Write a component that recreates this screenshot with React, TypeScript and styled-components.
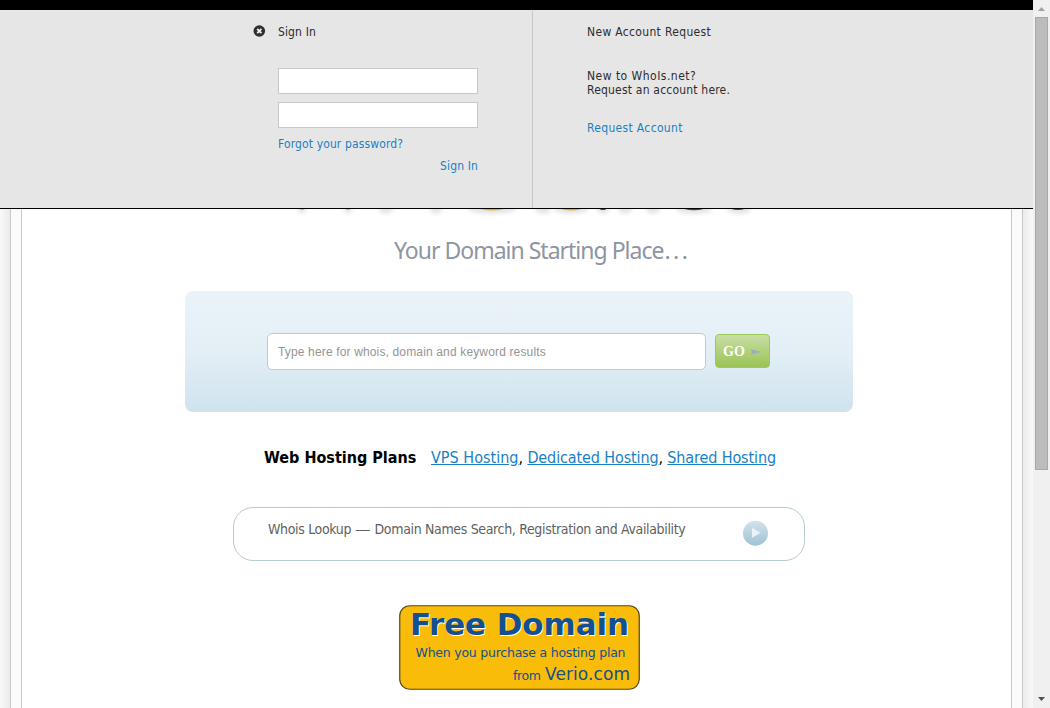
import React from "react";
import styled, { createGlobalStyle } from "styled-components";

const Global = createGlobalStyle`
  * { box-sizing: border-box; }
  body { margin: 0; background: #fff; overflow: hidden; }
`;
const ui = `"DejaVu Sans Condensed", "DejaVu Sans", Tahoma, sans-serif`;

const Window = styled.div`
  display: flex;
  width: 1050px;
  height: 708px;
  font-family: ${ui};
`;
const Viewport = styled.div`
  position: relative;
  display: flex;
  width: 1033px;
  height: 708px;
  overflow: hidden;
`;
const Edge = styled.div<{ $right?: boolean }>`
  width: 10px;
  flex: none;
  background: linear-gradient(${p => (p.$right ? "to right" : "to left")}, #ebebeb, #f9f9f9);
`;
const Gutter = styled.div`
  width: 12px;
  flex: none;
  border: solid #c8c8c8;
  border-width: 0 1px;
  background: #fbfbfb;
`;
const Page = styled.main`
  width: 987px;
  flex: 1;
  padding-top: 205px;
  display: flex;
  flex-direction: column;
  align-items: flex-start;
`;
const LogoArt = styled.svg`
  display: block;
  margin-left: 268px;
`;
const Tagline = styled.h2`
  margin: 14px 0 0 372px;
  font: 400 23px/32px "Noto Sans", sans-serif;
  letter-spacing: -1px;
  color: #8e95a1;
  white-space: nowrap;
`;
const Dots = styled.span`
  margin-left: 1px;
  letter-spacing: 2.5px;
`;
const SearchBox = styled.form`
  display: flex;
  align-items: flex-start;
  gap: 9px;
  width: 668px;
  height: 121px;
  margin: 25px 0 0 163px;
  padding: 42px 0 0 82px;
  border-radius: 8px;
  background: linear-gradient(#e9f3f7 0, #e8f1f8 20%, #e3eff5 50%, #cfe3ee 100%);
`;
const SearchInput = styled.input`
  width: 439px;
  height: 37px;
  padding: 0 10px;
  border: 1px solid #c8c8c8;
  border-radius: 5px;
  background: #fff;
  font: 12px "Liberation Sans", Arial, sans-serif;
  letter-spacing: 0.15px;
  &::placeholder { color: #959595; opacity: 1; }
`;
const GoButton = styled.button`
  display: flex;
  align-items: center;
  gap: 5px;
  width: 55px;
  height: 34px;
  margin-top: 1px;
  padding: 1px 0 0 7px;
  border: 1px solid #9ec75c;
  border-radius: 4px;
  background: linear-gradient(#c9dea5, #9bc354);
  color: #fff;
  font: bold 14px "Liberation Serif", serif;
`;
const Hosting = styled.div`
  display: flex;
  height: 24px;
  margin: 34px 0 0 242px;
  font-size: 16px;
  line-height: 24px;
  color: #000;
  white-space: nowrap;
`;
const HostingTitle = styled.strong`
  width: 167px;
`;
const HostingLinks = styled.span`
  letter-spacing: -0.12px;
  a { color: #1a80c4; text-decoration: underline; }
  a:first-child { letter-spacing: 0.02px; }
`;
const Lookup = styled.section`
  display: flex;
  justify-content: space-between;
  width: 572px;
  height: 54px;
  margin: 37px 0 0 211px;
  padding: 12px 35px 0 34px;
  border: 1px solid #b5cad1;
  border-radius: 20px;
  color: #616161;
  font-size: 14px;
  line-height: 19px;
  letter-spacing: -0.34px;
  white-space: nowrap;
`;
const Dash = styled.span`
  display: inline-block;
  width: 14px;
  margin: 0 1px;
  font-family: "Liberation Sans", sans-serif;
`;
const Banner = styled.svg`
  display: block;
  margin: 44px 0 0 377px;
`;
const Panel = styled.section`
  position: absolute;
  inset: 0 0 auto 0;
  display: flex;
  height: 209px;
  border-top: 10px solid #000;
  border-bottom: 1px solid #000;
  background: #e6e6e6;
  color: #2d2d2d;
  font-size: 12px;
  line-height: 14px;
`;
const SignIn = styled.div`
  display: flex;
  gap: 12px;
  width: 533px;
  padding: 15px 0 0 253px;
  border-right: 1px solid #c8c8c8;
  letter-spacing: 0.13px;
`;
const Fields = styled.form`
  display: flex;
  flex-direction: column;
  width: 200px;
`;
const Heading = styled.h3`
  margin: 0 0 29px;
  font: inherit;
`;
const Field = styled.input`
  width: 200px;
  height: 26px;
  margin-bottom: 8px;
  border: 1px solid #c8c8c8;
  background: #fff;
`;
const PanelLink = styled.a<{ $end?: boolean }>`
  align-self: ${p => (p.$end ? "flex-end" : "flex-start")};
  margin-bottom: 8px;
  color: #1a80c4;
`;
const PanelLinks = styled.div`
  display: flex;
  flex-direction: column;
  padding-top: 1px;
`;
const Account = styled.div`
  display: flex;
  flex-direction: column;
  padding: 15px 0 0 54px;
  letter-spacing: 0.33px;
`;
const Copy = styled.p`
  margin: 1px 0 24px;
  letter-spacing: 0.2px;
`;
const Question = styled.span`
  letter-spacing: 0.48px;
`;
const Scrollbar = styled.div`
  display: flex;
  flex-direction: column;
  align-items: center;
  width: 17px;
  height: 708px;
  background: #f0f0f0;
`;
const Thumb = styled.div`
  width: 13px;
  height: 453px;
  border: 1px solid #a8a8a8;
  background: #bcbcbc;
`;
const ScrollArrow = styled.svg<{ $bottom?: boolean }>`
  display: block;
  flex: none;
  margin-top: ${p => (p.$bottom ? "auto" : "0")};
`;

const shadows: [number, number][] = [
  [302, 4], [348, 4], [386, 7], [436, 6], [492, 24], [543, 8],
  [571, 17], [603, 6], [625, 7], [653, 7], [694, 18], [739, 12],
];

export default function App() {
  return (
    <>
      <Global />
      <Window>
        <Viewport>
          <Edge />
          <Gutter />
          <Page>
            <LogoArt width="480" height="15" viewBox="290 205 480 15">
              <defs>
                <filter id="soft" x="-50%" y="-100%" width="200%" height="300%">
                  <feGaussianBlur stdDeviation="2" />
                </filter>
              </defs>
              {shadows.map(([x, r]) => (
                <ellipse key={x} cx={x} cy="209" rx={r} ry="5" fill="#000" opacity=".1" filter="url(#soft)" />
              ))}
              <g fill="#f8ab0b">
                <ellipse cx="302" cy="209" rx="2" ry="1" />
                <ellipse cx="348" cy="209" rx="2" ry="1" />
                <ellipse cx="492" cy="207" rx="14" ry="3.4" />
                <ellipse cx="571" cy="207" rx="12" ry="3.4" />
              </g>
              <g fill="#444">
                <ellipse cx="603" cy="208" rx="3.5" ry="2" />
                <ellipse cx="694" cy="207" rx="12" ry="3.2" />
                <ellipse cx="738" cy="207" rx="9" ry="3" />
              </g>
            </LogoArt>
            <Tagline>
              Your Domain Starting Place<Dots>...</Dots>
            </Tagline>
            <SearchBox>
              <SearchInput placeholder="Type here for whois, domain and keyword results" />
              <GoButton type="button">
                GO
                <svg width="11" height="6" viewBox="0 0 11 6">
                  <path d="M0 .3L3 .9l2 .7L11 3 5 4.3 .6 5.7 2.5 3z" fill="#8faccb" />
                </svg>
              </GoButton>
            </SearchBox>
            <Hosting>
              <HostingTitle>Web Hosting Plans</HostingTitle>
              <HostingLinks>
                <a>VPS Hosting</a>, <a>Dedicated Hosting</a>, <a>Shared Hosting</a>
              </HostingLinks>
            </Hosting>
            <Lookup>
              <span>
                Whois Lookup <Dash>—</Dash> Domain Names Search, Registration and Availability
              </span>
              <svg width="26" height="26" viewBox="0 0 26 26">
                <defs>
                  <linearGradient id="play" x2="0" y2="1">
                    <stop stopColor="#d3e3eb" />
                    <stop offset="1" stopColor="#9fc2d5" />
                  </linearGradient>
                </defs>
                <circle cx="12.5" cy="13.2" r="12.5" fill="url(#play)" />
                <path d="M9 7.8l8.6 4.9-8.6 5z" fill="#eaf1f7" />
              </svg>
            </Lookup>
            <Banner width="241" height="85" viewBox="0 0 241 85">
              <rect x=".75" y=".75" width="239.5" height="83.5" rx="10" fill="#f9bc09" stroke="#54451f" strokeWidth="1.2" />
              <g fontFamily="DejaVu Sans, Verdana, sans-serif" fill="#14508d">
                <g fontSize="31" fontWeight="700">
                  <text x="12" y="30.5" textLength="219" fill="#fff">Free Domain</text>
                  <text x="11" y="29.5" textLength="219">Free Domain</text>
                </g>
                <text x="16.5" y="52" fontSize="12.5" textLength="210">When you purchase a hosting plan</text>
                <text x="114" y="75" fontSize="12.5" textLength="28">from</text>
                <text x="146" y="75" fontSize="17" textLength="85">Verio.com</text>
              </g>
            </Banner>
          </Page>
          <Gutter />
          <Edge $right />
          <Panel>
            <SignIn>
              <svg width="13" height="13" viewBox="0 0 13 13">
                <circle cx="6.3" cy="6" r="5.8" fill="#302f2f" />
                <path d="M4.2 4l4.2 4.2M8.4 4L4.2 8.2" stroke="#eee" strokeWidth="1.8" />
              </svg>
              <Fields>
                <Heading>Sign In</Heading>
                <Field />
                <Field type="password" />
                <PanelLinks>
                  <PanelLink>Forgot your password?</PanelLink>
                  <PanelLink $end>Sign In</PanelLink>
                </PanelLinks>
              </Fields>
            </SignIn>
            <Account>
              <Heading>New Account Request</Heading>
              <Copy>
                <Question>New to WhoIs.net?</Question>
                <br />
                Request an account here.
              </Copy>
              <PanelLink>Request Account</PanelLink>
            </Account>
          </Panel>
        </Viewport>
        <Scrollbar>
          <ScrollArrow width="17" height="17" viewBox="0 0 17 17">
            <path d="M5 11l3.5-4L12 11z" fill="#a2a2a2" />
          </ScrollArrow>
          <Thumb />
          <ScrollArrow $bottom width="17" height="17" viewBox="0 0 17 17">
            <path d="M5 6l3.5 4L12 6z" fill="#505050" />
          </ScrollArrow>
        </Scrollbar>
      </Window>
    </>
  );
}
